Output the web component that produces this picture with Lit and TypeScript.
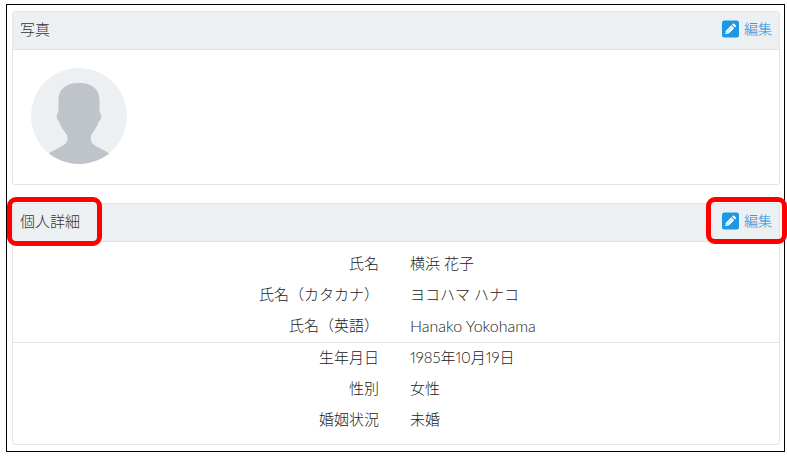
import { LitElement, html, css, nothing } from "lit";
import { customElement, property } from "lit/decorators.js";

@customElement("info-card")
class InfoCard extends LitElement {
  @property() heading = "";
  @property({ type: Boolean }) marked = false;

  static styles = css`
    :host {
      display: block;
      border: 1px solid #e3e5e6;
      border-radius: 3px;
      background: #fff;
    }
    .header {
      display: flex;
      justify-content: space-between;
      align-items: center;
      box-sizing: border-box;
      min-height: 38px;
      padding: 0 7px 4px 7px;
      background: #ecf0f3;
      border-bottom: 1px solid #dfe2e4;
      border-radius: 2px 2px 0 0;
    }
    .title {
      position: relative;
      margin: 0;
      font-size: 15px;
      line-height: 20px;
      font-weight: 300;
      color: #333;
    }
    .edit {
      position: relative;
      display: flex;
      align-items: center;
      gap: 4px;
      padding: 0;
      border: 0;
      background: none;
      font: inherit;
      font-size: 14px;
      line-height: 20px;
      color: #0d8ddb;
      cursor: pointer;
    }
    .icon {
      display: block;
      width: 18px;
      height: 18px;
    }
    .mark {
      position: absolute;
      border: 5px solid #fe0000;
      border-radius: 9px;
      pointer-events: none;
    }
    .title .mark {
      inset: -14px -22px -15px -13px;
    }
    .edit .mark {
      inset: -14px -15px -13px -16px;
    }
  `;

  render() {
    const mark = this.marked ? html`<span class="mark"></span>` : nothing;
    return html`
      <div class="header">
        <h2 class="title">${this.heading}${mark}</h2>
        <button class="edit" type="button">
          <svg class="icon" viewBox="0 0 18 18" aria-hidden="true">
            <rect x="0" y="0.5" width="17" height="17" rx="2.500" fill="#1c97e3" />
            <path
              d="M3.200 14.300 3.900 10.700 9.300 5.300 12.200 8.200 6.800 13.600Z M10 4.600 10.800 3.800Q11.500 3.200 12.200 3.800L13.700 5.300Q14.300 6 13.700 6.700L12.900 7.500Z"
              fill="#fff"
            />
            <path d="M6.200 10.700 9.500 7.400" stroke="#1c97e3" stroke-width="0.5" />
            <path d="M4.300 12.100 5.400 13.200" stroke="#1c97e3" stroke-width="0.7" />
          </svg>
          <span>編集</span>
          ${mark}
        </button>
      </div>
      <slot></slot>
    `;
  }
}

const groups = [
  [
    ["氏名", "横浜 花子"],
    ["氏名（カタカナ）", "ヨコハマ ハナコ"],
    ["氏名（英語）", "Hanako Yokohama", "latin"],
  ],
  [
    ["生年月日", "1985年10月19日"],
    ["性別", "女性"],
    ["婚姻状況", "未婚"],
  ],
];

@customElement("app-root")
class AppRoot extends LitElement {
  static styles = css`
    :host {
      display: block;
      padding: 4px 2px 4px 6px;
      font-family: Lato, "Noto Sans CJK JP", sans-serif;
      font-weight: 300;
    }
    .frame {
      display: flex;
      flex-direction: column;
      gap: 18px;
      padding: 6px 4px 6px 5px;
      border: 1px solid #000;
      background: #fff;
    }
    .photo {
      padding: 18px 18px 20px;
    }
    .avatar {
      display: block;
      width: 96px;
      height: 96px;
    }
    .details {
      margin: 0;
      padding: 7px 0 8px;
    }
    .group + .group {
      border-top: 1px solid #e2e4e5;
    }
    .row {
      display: grid;
      grid-template-columns: 1fr 1fr;
      padding-bottom: 2px;
      font-size: 15px;
      line-height: 29px;
      color: #222;
    }
    .label {
      padding-right: 17px;
      text-align: right;
    }
    .value {
      margin: 0;
      padding-left: 14px;
      font-variant-numeric: proportional-nums;
    }
    .latin {
      font-size: 16px;
    }
  `;

  render() {
    return html`
      <main class="frame">
        <info-card heading="写真">
          <div class="photo">
            <svg class="avatar" viewBox="0 0 96 96" role="img" aria-label="写真">
              <defs>
                <clipPath id="disc"><circle cx="48" cy="48" r="48" /></clipPath>
              </defs>
              <circle cx="48" cy="48" r="48" fill="#ecf0f3" />
              <path
                clip-path="url(#disc)"
                fill="#bfc4cb"
                d="M48 15C61 15 68.500 21 68.500 32V44C71 46 71 51 67.500 54C66 59 63.500 62 60.500 66.500C59.500 69 59.500 73 61 75C65 79 72 81 79 86V96H17V86C24 81 31 79 35 75C37 73 37 69 35.500 66.500C32.500 62 29.500 59 28.500 54C25 51 25 46 27.500 44V32C27.500 21 35 15 48 15Z"
              />
            </svg>
          </div>
        </info-card>
        <info-card heading="個人詳細" marked>
          <dl class="details">
            ${groups.map(
              (rows) => html`<div class="group">
                ${rows.map(
                  ([label, value, script = ""]) => html`<div class="row">
                    <dt class="label">${label}</dt>
                    <dd class="value ${script}">${value}</dd>
                  </div>`
                )}
              </div>`
            )}
          </dl>
        </info-card>
      </main>
    `;
  }
}
